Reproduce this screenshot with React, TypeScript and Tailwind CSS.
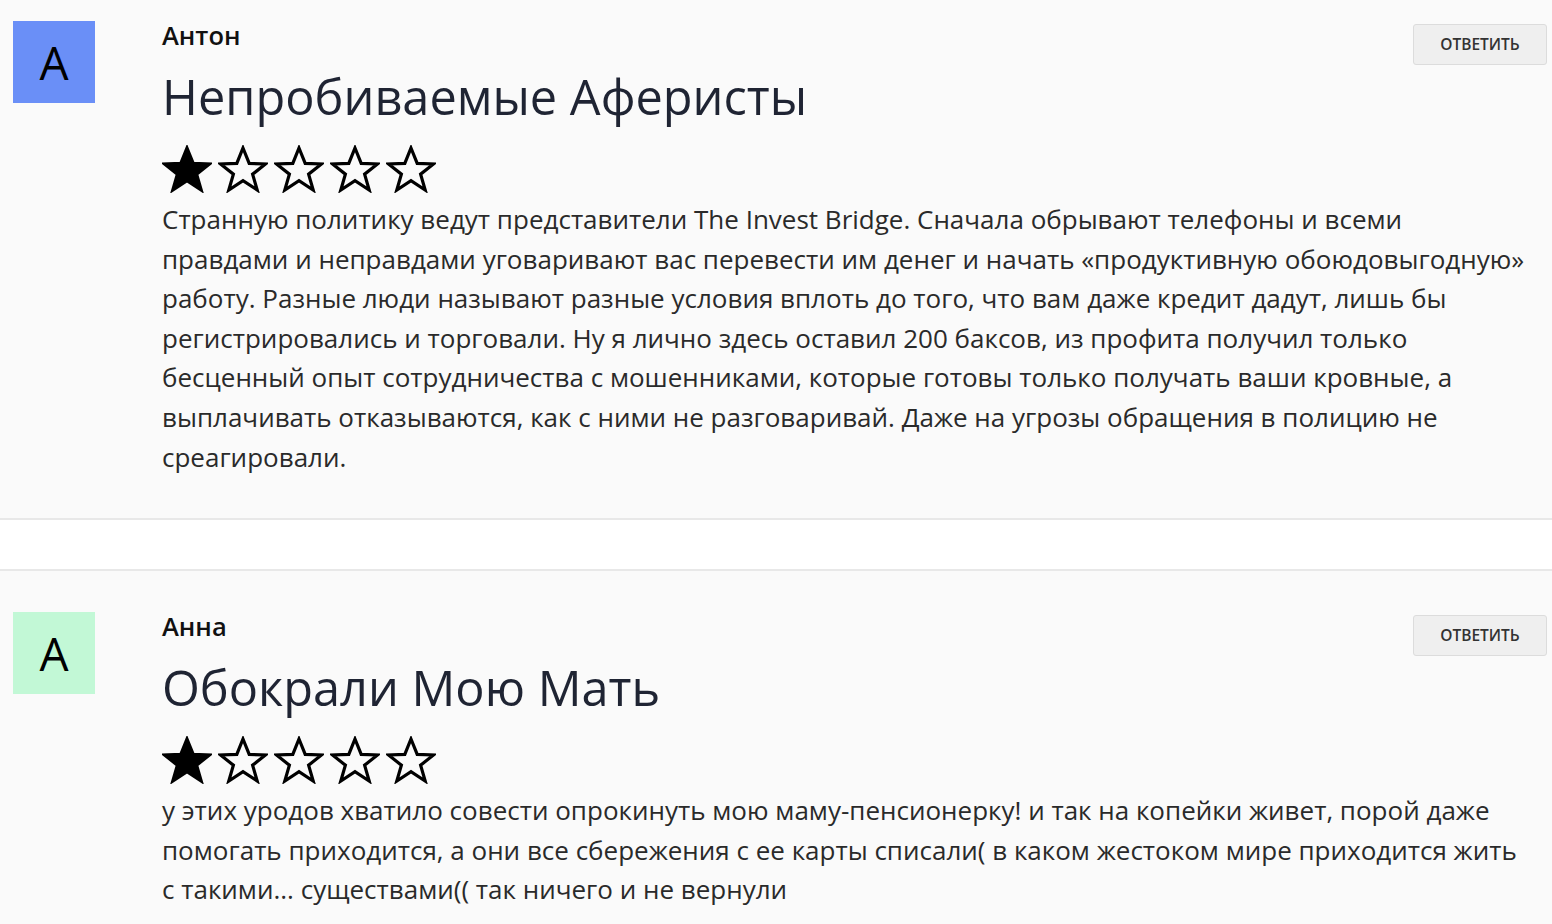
import React from 'react'

type Review = {
  name: string
  letter: string
  color: string
  title: string
  rating: number
  text: string
}

const reviews: Review[] = [
  {
    name: 'Антон',
    letter: 'А',
    color: 'bg-[#6a8ff7]',
    title: 'Непробиваемые Аферисты',
    rating: 1,
    text:
      'Странную политику ведут представители The Invest Bridge. Сначала обрывают телефоны и всеми правдами и неправдами уговаривают вас перевести им денег и начать «продуктивную обоюдовыгодную» работу. Разные люди называют разные условия вплоть до того, что вам даже кредит дадут, лишь бы регистрировались и торговали. Ну я лично здесь оставил 200 баксов, из профита получил только бесценный опыт сотрудничества с мошенниками, которые готовы только получать ваши кровные, а выплачивать отказываются, как с ними не разговаривай. Даже на угрозы обращения в полицию не среагировали.',
  },
  {
    name: 'Анна',
    letter: 'А',
    color: 'bg-[#c2f8d6]',
    title: 'Обокрали Мою Мать',
    rating: 1,
    text:
      'у этих уродов хватило совести опрокинуть мою маму-пенсионерку! и так на копейки живет, порой даже помогать приходится, а они все сбережения с ее карты списали( в каком жестоком мире приходится жить с такими... существами(( так ничего и не вернули',
  },
]

function Star({ filled }: { filled: boolean }) {
  return (
    <svg width="50" height="48" viewBox="0 0 50 48" className="shrink-0">
      <polygon
        points="25,3 31.2,18.4 47.5,18.9 34.6,29.2 39.2,45 25,35.6 10.8,45 15.4,29.2 2.5,18.9 18.8,18.4"
        fill={filled ? '#000' : 'none'}
        stroke="#000"
        strokeWidth="3.2"
        strokeLinejoin="miter"
      />
    </svg>
  )
}

function ReviewCard({ r, first }: { r: Review; first?: boolean }) {
  return (
    <div
      className={`flex bg-[#fafafa] border-[#e8e8e8] ${first ? 'border-b-2 pt-[21px] pb-[41px]' : 'border-t-2 pt-[41px] pb-10'}`}
    >
      <div className="w-[162px] shrink-0 pl-[13px]">
        <div className={`w-[82px] h-[82px] ${r.color} flex items-center justify-center text-[46px] font-normal leading-none text-black`}>
          {r.letter}
        </div>
      </div>
      <div className="flex-1 min-w-0 pr-[5px]">
        <div className="flex items-start justify-between">
          <div className="-mt-[1px] text-[25.5px] leading-[30px] font-semibold text-[#111]">{r.name}</div>
          <button className="mt-[3px] w-[134px] h-[41px] bg-[#efefef] border border-[#dcdcdc] rounded-[3px] text-[15.5px] text-[#333] font-semibold">
            ОТВЕТИТЬ
          </button>
        </div>
        <h2 className="mt-[1px] text-[48.7px] leading-[60px] font-medium text-[#1f2433]">{r.title}</h2>
        <div className="flex gap-[6px] mt-[19px]">
          {[0, 1, 2, 3, 4].map((i) => (
            <Star key={i} filled={i < r.rating} />
          ))}
        </div>
        <p className="mt-[7px] max-w-[1363px] text-[26px] leading-[39.6px] text-[#2a2a2a]">{r.text}</p>
      </div>
    </div>
  )
}

export default function App() {
  return (
    <div className="min-h-screen bg-white font-['Open_Sans',sans-serif] w-[1552px] overflow-hidden">
      <ReviewCard r={reviews[0]} first />
      <div className="h-[49px] bg-white" />
      <ReviewCard r={reviews[1]} />
    </div>
  )
}
